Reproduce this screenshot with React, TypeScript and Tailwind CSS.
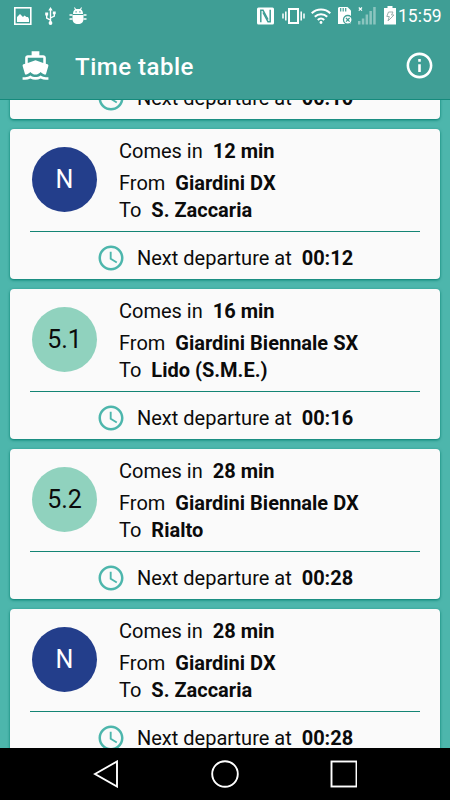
import { MdInfoOutline, MdAccessTime } from 'react-icons/md';

interface Departure {
  line: string;
  minutes: number;
  from: string;
  to: string;
  time: string;
}

const departures: Departure[] = [
  { line: '5.2', minutes: 10, from: 'Giardini Biennale DX', to: 'Rialto', time: '00:10' },
  { line: 'N', minutes: 12, from: 'Giardini DX', to: 'S. Zaccaria', time: '00:12' },
  { line: '5.1', minutes: 16, from: 'Giardini Biennale SX', to: 'Lido (S.M.E.)', time: '00:16' },
  { line: '5.2', minutes: 28, from: 'Giardini Biennale DX', to: 'Rialto', time: '00:28' },
  { line: 'N', minutes: 28, from: 'Giardini DX', to: 'S. Zaccaria', time: '00:28' },
];

function BoatIcon() {
  return (
    <svg className="size-[31px]" viewBox="0 0 24 24" fill="currentColor">
      <path d="M20 21c-1.390 0-2.780-.47-4-1.320-2.440 1.710-5.560 1.710-8 0C6.780 20.530 5.390 21 4 21H2v2h2c1.380 0 2.740-.35 4-.99 2.520 1.290 5.480 1.290 8 0 1.260.65 2.620.99 4 .99h2v-2h-2zM3.950 19H4c1.600 0 3.020-.88 4-2 .98 1.120 2.400 2 4 2s3.020-.88 4-2c.98 1.120 2.400 2 4 2h.05l1.890-6.680c.08-.26.06-.54-.06-.78s-.34-.42-.6-.5L20 10.620V6c0-1.100-.9-2-2-2h-3V1H9v3H6c-1.100 0-2 .9-2 2v4.620l-1.290.42c-.26.08-.48.26-.6.5s-.15.52-.06.78L3.950 19zM6 6h12v3.970L12 8 6 9.970V6z" />
    </svg>
  );
}

function StatusBar() {
  return (
    <div className="flex h-[31px] items-center justify-between pl-[14px] pr-[9px] text-white">
      <div className="flex items-center">
        <svg className="h-[18px] w-[18px]" viewBox="0 0 18 18">
          <rect x="0.8" y="0.8" width="16" height="16.4" fill="none" stroke="currentColor" strokeWidth="1.6" />
          <path d="M3 15V10l3-3 3 3 1.5-1.5 2 1.5 1.5 0 1 2v3z" fill="currentColor" />
        </svg>
        <svg className="ml-[13px] h-[18px] w-[11px]" viewBox="0 0 11 18" fill="none" stroke="currentColor" strokeWidth="1.400">
          <path d="M5.500 2.500v13.500M5.500 13.200L1.700 11V7M5.500 11l3.800-2V6.500" />
          <path d="M5.500 0L3.300 3.600h4.400zM.2 5.600h3v2.800h-3zM7.800 4.500h2.900v2.800H7.800z" fill="currentColor" stroke="none" />
          <circle cx="5.500" cy="16" r="1.900" fill="currentColor" stroke="none" />
        </svg>
        <svg className="ml-[13px] h-[18px] w-[18px]" viewBox="0 0 18 18" fill="currentColor">
          <path d="M4 7C4 4.500 5 3 6 2.500L5 .8 5.800.3 7 2h4L12.200.3 13 .8 12 2.500C13 3 14 4.500 14 7z" />
          <path d="M3.500 8h11v4c0 3-2 5-5.500 5s-5.500-2-5.500-5z" />
          <path d="M.5 8h3M.5 12h3M14.500 8h3M14.500 12h3" stroke="currentColor" strokeWidth="1.300" />
          <path d="M6.500 4.300h1.200v1.200H6.500zM10.300 4.300h1.200v1.200h-1.200z" fill="#3f9e95" />
        </svg>
      </div>

      <div className="flex items-center">
        <svg className="h-[18px] w-[17px]" viewBox="0 0 17 18">
          <rect x="0" y="0.5" width="17" height="17" rx="1.500" fill="currentColor" />
          <path d="M3.800 15.300V3.300h2.200L11 12.500" fill="none" stroke="#3f9e95" strokeWidth="1.500" />
          <path d="M13.200 2.700v12h-2.200L6 5.500" fill="none" stroke="#3f9e95" strokeWidth="1.500" />
        </svg>
        <svg className="ml-[8px] h-[18px] w-[23px]" viewBox="0 0 23 18" fill="none" stroke="currentColor">
          <rect x="7" y="2" width="9" height="14" strokeWidth="2" />
          <path d="M3.800 4.500v9M19.200 4.500v9" strokeWidth="1.500" />
          <path d="M1 6.500v5M22 6.500v5" strokeWidth="1.500" />
        </svg>
        <svg className="ml-[6px] h-[18px] w-[20px]" viewBox="0 0 20 18" fill="none" stroke="currentColor" strokeWidth="2.100">
          <path d="M.7 6.200a13.500 13.500 0 0 1 18.600 0M3.800 9.700a9 9 0 0 1 12.400 0M6.800 12.900a4.600 4.600 0 0 1 6.400 0" />
          <circle cx="10" cy="15.500" r="1.400" fill="currentColor" stroke="none" />
        </svg>
        <svg className="ml-[7px] h-[19px] w-[15px]" viewBox="0 0 15 19">
          <path d="M1 1h8.500L13 4.500V18H0V2z" fill="currentColor" />
          <path d="M2.700 2v3.500M5.200 2v3.500M7.700 2v3.500" stroke="#3f9e95" strokeWidth="1.200" />
          <circle cx="9.800" cy="13.800" r="4.300" fill="white" stroke="#3f9e95" strokeWidth="1.300" />
          <path d="M8 12l3.600 3.600M11.600 12L8 15.600" stroke="#3f9e95" strokeWidth="1.300" />
        </svg>
        <svg className="ml-[5px] h-[19px] w-[18px]" viewBox="0 0 18 19" fill="currentColor">
          <path d="M.8 1.500l3.200 3.200M4 1.500L.8 4.700" stroke="currentColor" strokeWidth="1.100" />
          <path d="M0 15h2.500v3.500H0zM3.800 12.500h2.500v6H3.800zM7.600 8.500h2.500v10H7.600zM11.400 5h2.500v13.500h-2.500zM15.200 1h2.500v17.500h-2.500z" opacity=".4" />
        </svg>
        <svg className="ml-[8px] h-[19px] w-[12px]" viewBox="0 0 12 19">
          <path d="M3.500 0h5v2H12v16.500H0V2h3.500z" fill="currentColor" />
          <path d="M4.500 6h4.500L7.500 9h2.500L4 15l1.300-4.500H2.800z" fill="none" stroke="#9bb0ad" strokeWidth="1" />
        </svg>
        <span className="ml-[2px] w-[43px] text-[17.5px] leading-5">15:59</span>
      </div>
    </div>
  );
}

function LineBadge({ line }: { line: string }) {
  const color = line === 'N' ? 'bg-[#233e8b] text-white' : 'bg-[#90d2be] text-[#0b0b0b]';
  return (
    <div className={`mt-[18px] flex size-[65px] items-center justify-center rounded-full text-[25px] ${color}`}>
      {line}
    </div>
  );
}

function DepartureCard({ departure }: { departure: Departure }) {
  return (
    <div className="h-[150px] shrink-0 rounded-[4px] bg-[#fafafa] px-5 text-xl text-[#0b0b0b] shadow-[0_1px_3px_#00796b]">
      <div className="flex h-[102px] pl-[2px]">
        <LineBadge line={departure.line} />
        <div className="ml-[22px] pt-[9px] leading-[27px]">
          <p className="mb-[5px]">
            Comes in <b className="ml-[5px] font-bold">{departure.minutes} min</b>
          </p>
          <p>
            From <b className="ml-[5px] font-bold">{departure.from}</b>
          </p>
          <p>
            To <b className="ml-[5px] font-bold">{departure.to}</b>
          </p>
        </div>
      </div>
      <div className="flex h-[48px] items-center border-t border-[#148574] pl-[66px] pt-[5px]">
        <MdAccessTime className="size-[30px] text-[#4db6ac]" />
        <span className="ml-[11px]">
          Next departure at <b className="ml-[5px] font-bold">{departure.time}</b>
        </span>
      </div>
    </div>
  );
}

function NavBar() {
  return (
    <div className="flex h-[52px] items-center justify-center bg-black">
      <svg className="h-[28px] w-[264px]" viewBox="0 0 264 28" fill="none" stroke="white" strokeWidth="1.900">
        <path d="M2 14L24 1.500v25z" />
        <circle cx="132" cy="14" r="12.800" />
        <rect x="238.500" y="1.500" width="25" height="25" />
      </svg>
    </div>
  );
}

export default function App() {
  return (
    <div className="flex h-[800px] w-[450px] flex-col overflow-hidden bg-[#4db6ac] font-[Roboto,sans-serif]">
      <header className="h-[100px] shrink-0 border-b border-[#158a7c] bg-[#3f9e95] text-white">
        <StatusBar />
        <div className="flex h-[68px] items-center pl-[20px] pr-[15px]">
          <BoatIcon />
          <h1 className="ml-[24px] flex-1 pt-[3px] text-2xl font-medium tracking-[0.5px]">Time table</h1>
          <MdInfoOutline className="size-[31px]" />
        </div>
      </header>

      <main className="flex-1 overflow-hidden px-[10px]">
        <div className="-mt-[131px] flex flex-col gap-[10px]">
          {departures.map((departure, index) => (
            <DepartureCard key={index} departure={departure} />
          ))}
        </div>
      </main>

      <NavBar />
    </div>
  );
}
